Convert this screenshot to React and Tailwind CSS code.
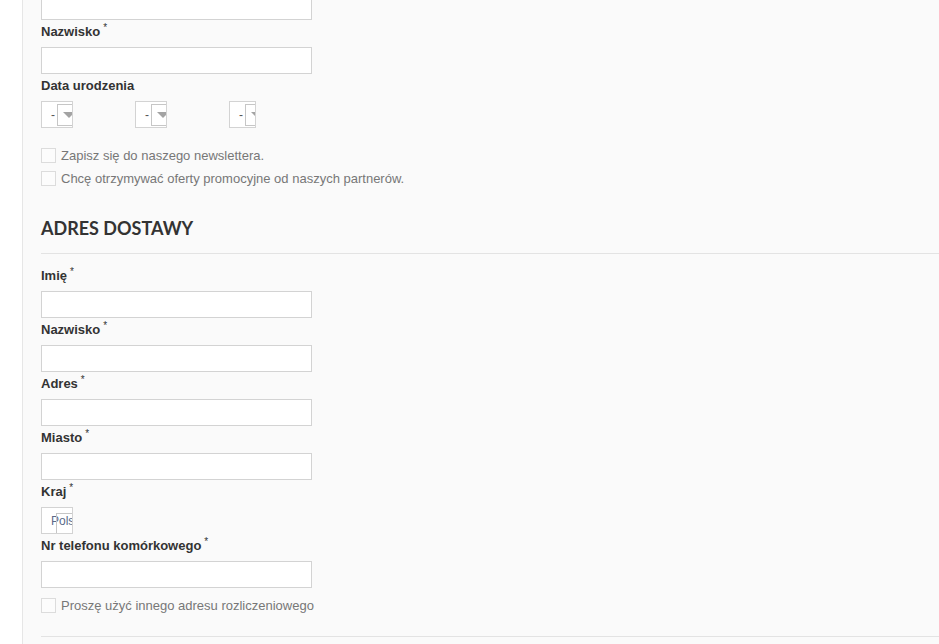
import React from 'react';

const sans = { fontFamily: '"Liberation Sans", Arial, sans-serif' };

function Label({ children, required }) {
  return (
    <div className="pt-[3px] pb-[6px] text-[13px] leading-[18px] font-bold text-[#333]">
      {children}
      {required && <sup className="ml-[3px] text-[10px] font-normal text-[#333]">*</sup>}
    </div>
  );
}

function Input() {
  return <div className="h-[27px] w-[271px] border border-[#d3d3d3] bg-white" />;
}

function Field({ label, required }) {
  return (
    <div>
      <Label required={required}>{label}</Label>
      <Input />
    </div>
  );
}

function MiniSelect({ width = 'w-[32px]' }) {
  return (
    <div className={`${width} h-[27px] border border-[#d3d3d3] bg-white flex items-center overflow-hidden`}>
      <span className="pl-[9px] text-[12px] text-[#555] leading-none">-</span>
      <div className="ml-[2px] mt-[1px] h-[22px] w-[30px] shrink-0 border border-r-0 border-[#c6c6c6] bg-white flex items-center pl-[5px]">
        <svg width="12" height="6" viewBox="0 0 12 6">
          <path d="M0 0 L12 0 L6 6 Z" fill="#a3a3a3" />
        </svg>
      </div>
    </div>
  );
}

function Check({ children }) {
  return (
    <label className="flex items-center h-[23px] text-[13px] text-[#777]">
      <span className="w-[15px] h-[15px] border border-[#dcdcdc] bg-[#fcfcfc] mr-[5px] shrink-0" />
      {children}
    </label>
  );
}

export default function App() {
  return (
    <div className="h-[644px] w-[939px] overflow-hidden flex bg-white" style={sans}>
      <div className="w-[23px] shrink-0 bg-white border-r border-[#e6e6e6]" />
      <div className="flex-1 bg-[#fafafa] pl-[18px]">
        {/* Dane osobowe */}
        <div className="mt-[-7px]">
          <Input />
        </div>
        <Field label="Nazwisko" required />
        <Label>Data urodzenia</Label>
        <div className="flex">
          <MiniSelect />
          <div className="ml-[62px]">
            <MiniSelect />
          </div>
          <div className="ml-[62px]">
            <MiniSelect width="w-[27px]" />
          </div>
        </div>
        <div className="mt-[16px]">
          <Check>Zapisz się do naszego newslettera.</Check>
          <Check>Chcę otrzymywać oferty promocyjne od naszych partnerów.</Check>
        </div>

        {/* Adres dostawy */}
        <h2
          className="mt-[26px] text-[18px] leading-[24px] font-bold text-[#333]"
          style={{ fontFamily: 'Lato, "Open Sans", sans-serif' }}
        >
          ADRES DOSTAWY
        </h2>
        <div className="mt-[13px] border-b border-[#e3e3e3]" />
        <div className="mt-[10px]">
          <Field label="Imię" required />
          <Field label="Nazwisko" required />
          <Field label="Adres" required />
          <Field label="Miasto" required />
          <Label required>Kraj</Label>
          <div className="relative w-[32px] h-[27px] border border-[#d3d3d3] bg-white overflow-hidden flex items-center">
            <span className="pl-[9px] text-[12px] text-[#5a6a8a] whitespace-nowrap">Pols</span>
            <div className="absolute left-[14px] top-[5px] w-[40px] h-[30px] border border-[#c6c6c6]" />
          </div>
          <Field label="Nr telefonu komórkowego" required />
        </div>
        <div className="mt-[6px]">
          <Check>Proszę użyć innego adresu rozliczeniowego</Check>
        </div>
        <div className="mt-[19px] border-b border-[#e3e3e3]" />
      </div>
    </div>
  );
}
